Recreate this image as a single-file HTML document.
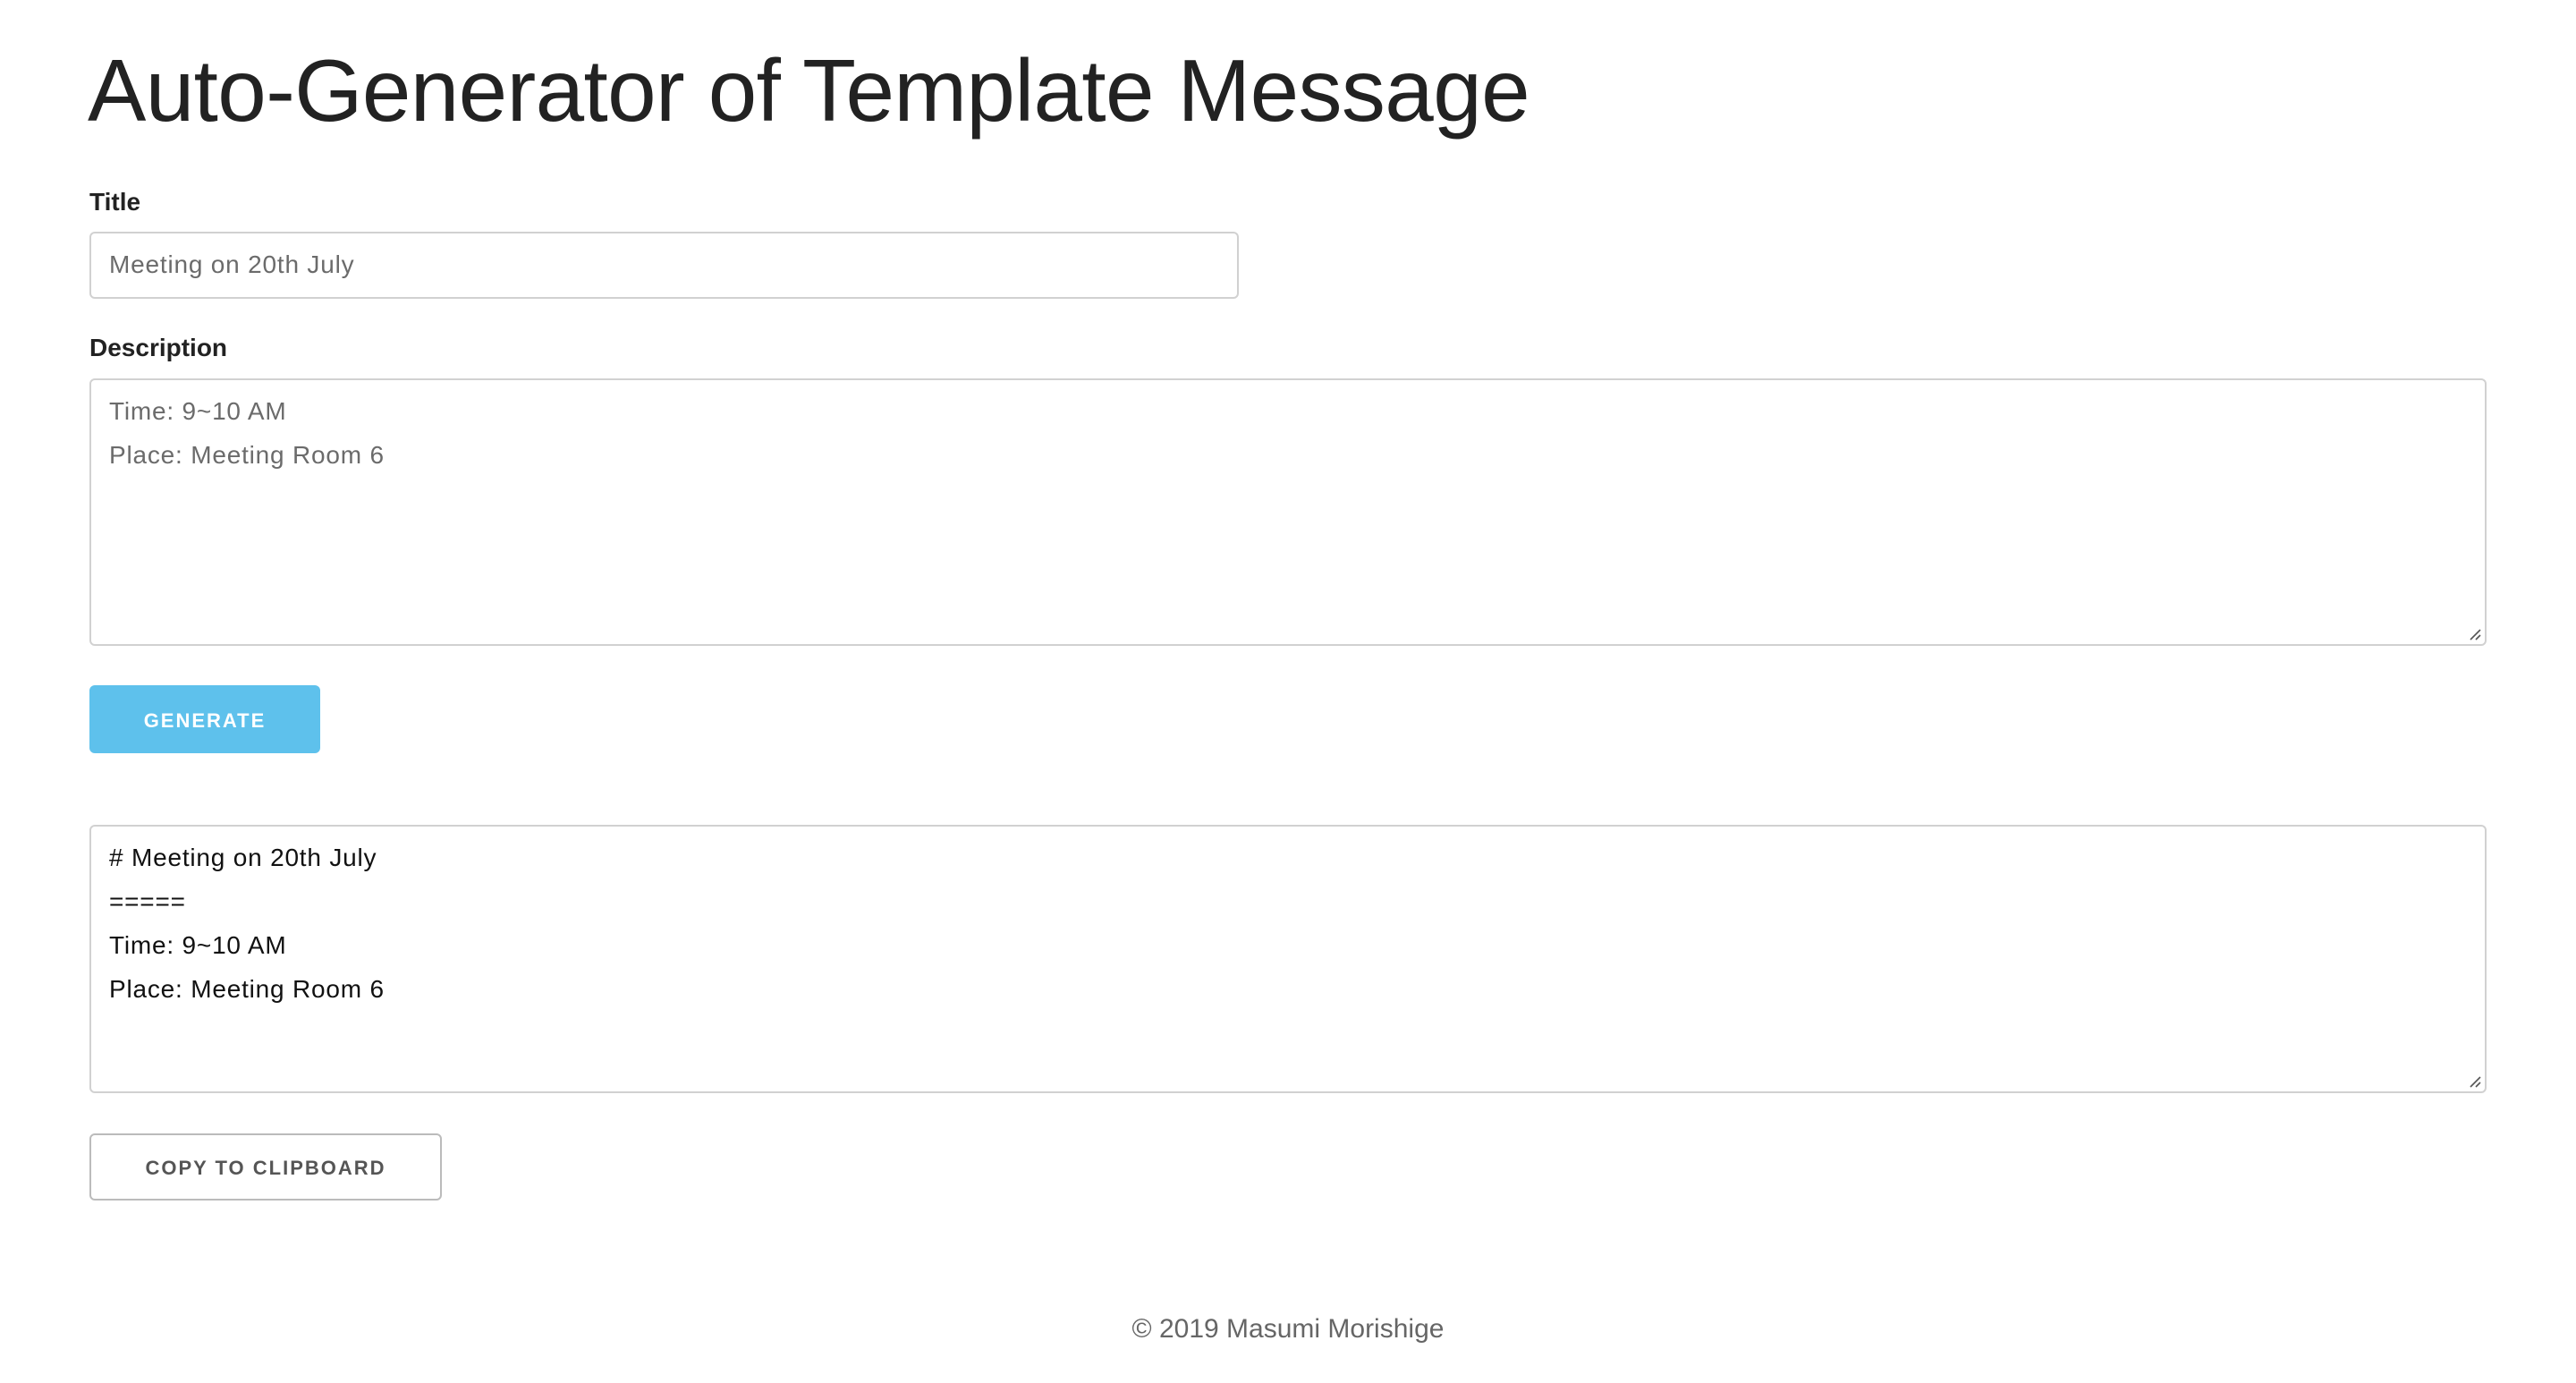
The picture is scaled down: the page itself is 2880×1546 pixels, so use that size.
<!DOCTYPE html>
<html><head><meta charset="utf-8"><style>
*{box-sizing:border-box;margin:0;padding:0}
html,body{width:2880px;height:1546px;background:#fff;overflow:hidden}
body{font-family:"Liberation Sans",Helvetica,Arial,sans-serif;color:#222;position:relative}
.a{position:absolute;white-space:nowrap}
h1{position:absolute;left:98px;top:41px;font-size:98px;font-weight:400;letter-spacing:-0.6px;line-height:120px;color:#222}
.lab{font-size:28px;font-weight:700;line-height:32px}
.box{position:absolute;border:2px solid #d1d1d1;border-radius:6px;background:#fff}
.t{position:absolute;left:20px;font-size:28px;line-height:49px;white-space:pre;letter-spacing:0.8px}
.grip{position:absolute;right:4px;bottom:4px;width:14px;height:14px}
.btn{position:absolute;border-radius:6px;font-size:22px;font-weight:700;letter-spacing:2px;text-align:center}
</style></head><body>
<h1>Auto-Generator of Template Message</h1>
<div class="a lab" style="left:100px;top:210px">Title</div>
<div class="box" style="left:100px;top:259px;width:1285px;height:75px">
 <div class="t" style="top:10px;color:#6b6b6b">Meeting on 20th July</div>
</div>
<div class="a lab" style="left:100px;top:373px">Description</div>
<div class="box" style="left:100px;top:423px;width:2680px;height:299px">
 <div class="t" style="top:10px;color:#6b6b6b">Time: 9~10 AM
Place: Meeting Room 6</div>
 <svg class="grip" viewBox="0 0 14 14"><path d="M13 2L2 13M13 8L8 13" stroke="#555" stroke-width="1.6"/></svg>
</div>
<div class="btn" style="left:100px;top:766px;width:258px;height:76px;background:#5ec1ec;color:#fff;line-height:80px">GENERATE</div>
<div class="box" style="left:100px;top:922px;width:2680px;height:300px">
 <div class="t" style="top:10px;color:#111"># Meeting on 20th July
=====
Time: 9~10 AM
Place: Meeting Room 6</div>
 <svg class="grip" viewBox="0 0 14 14"><path d="M13 2L2 13M13 8L8 13" stroke="#555" stroke-width="1.6"/></svg>
</div>
<div class="btn" style="left:100px;top:1267px;width:394px;height:75px;border:2px solid #bbb;color:#555;line-height:74px">COPY TO CLIPBOARD</div>
<div class="a" style="left:0;width:2880px;text-align:center;top:1468px;font-size:30px;line-height:36px;color:#666">© 2019 Masumi Morishige</div>
</body></html>
